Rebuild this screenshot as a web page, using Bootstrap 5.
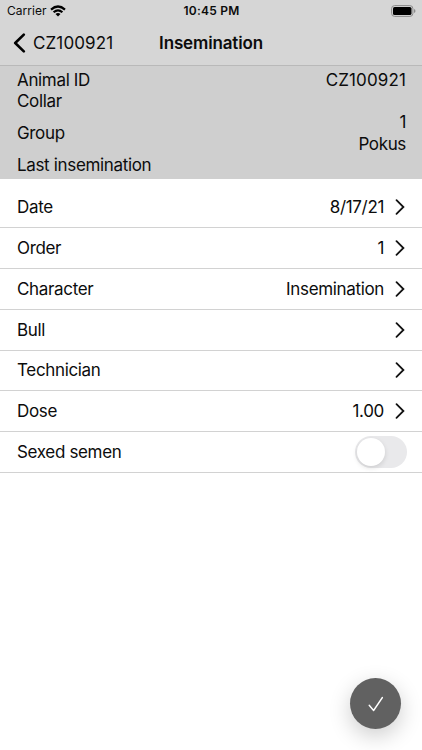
<!DOCTYPE html>
<html lang="en">
<head>
<meta charset="utf-8">
<meta name="viewport" content="width=device-width, initial-scale=1">
<title>Insemination</title>
<link href="https://cdn.jsdelivr.net/npm/bootstrap@5.3.0/dist/css/bootstrap.min.css" rel="stylesheet">
<style>
body{font-family:Inter,"Liberation Sans",sans-serif;font-size:17px;line-height:20px;color:#0c0c0c;letter-spacing:-.34px;height:750px;overflow:hidden}
svg{display:block;flex:none}
.top-area{background:#d6d6d6;height:66px;border-bottom:1px solid #b9b9b9}
.status{height:22px;font-size:12px;line-height:22px;padding:0 6px 0 7px}
.side{flex:1 1 0}
.status .carrier{letter-spacing:.02px}
.clock{letter-spacing:.25px}
.title-bar{height:43px;padding:0 13px 1px}
.title-bar .page-title{letter-spacing:-.15px}
.code-text{letter-spacing:.12px}
.back-text{margin-left:7px}
.info{background:#cfcfcf;height:113px;padding:4px 16px 0 17px}
.info .gap-a{margin-top:1px}
.info .gap-b{margin-top:12px}
.info .gap-c{margin-top:22px}
.info .gap-d{margin-top:2px}
.rows{padding-top:8.2px}
.item{height:40.83px;border:0;border-bottom:1px solid #d2d2d2;padding:0 16px 0 17px;color:#0c0c0c}
.item svg{margin-left:10px}
.switch{width:52px;height:32px;background:#e9e9eb;border-radius:16px;padding:2px;margin-right:-1px}
.knob{width:28px;height:28px;background:#fff;border-radius:50%;box-shadow:0 2px 5px rgba(0,0,0,.12)}
.confirm{width:51px;height:51px;right:21px;bottom:21px;background:#616161;box-shadow:0 7px 22px rgba(0,0,0,.2)}
</style>
<script src="https://cdn.jsdelivr.net/npm/bootstrap@5.3.0/dist/js/bootstrap.bundle.min.js"></script>
</head>
<body class="bg-white position-relative">
<header class="top-area">
  <div class="status d-flex align-items-center">
    <div class="side d-flex align-items-center"><span class="carrier">Carrier</span>
      <svg class="ms-1" width="16" height="12" viewBox="0 0 16 12"><g fill="none" stroke="#000" stroke-width="2.2"><path d="M1 4.6Q8-1.6 15 4.6"/><path d="M3.6 7.3Q8 3.4 12.4 7.3"/></g><path d="M8 11.4 5.5 8.9Q8 7 10.5 8.9Z"/></svg>
    </div>
    <span class="clock fw-semibold">10:45 PM</span>
    <div class="side d-flex justify-content-end">
      <svg width="25" height="12" viewBox="0 0 25 12"><rect x=".6" y=".6" width="21.3" height="10.8" rx="3" fill="none" stroke="#8b8b8b"/><rect x="2" y="2" width="18.5" height="8" rx="1.6"/><path d="M23 4q1.5.5 1.5 2T23 8Z" fill="#8b8b8b"/></svg>
    </div>
  </div>
  <nav class="title-bar d-flex align-items-center">
    <div class="side d-flex align-items-center">
      <svg width="13" height="20" viewBox="0 0 13 20"><path d="M10.8 1.6 2.2 10l8.6 8.4" fill="none" stroke="#000" stroke-width="2.6" stroke-linecap="round" stroke-linejoin="round"/></svg>
      <span class="back-text code-text">CZ100921</span>
    </div>
    <span class="page-title fw-semibold">Insemination</span>
    <div class="side"></div>
  </nav>
</header>
<section class="info d-flex justify-content-between">
  <div><div>Animal ID</div><div class="gap-a">Collar</div><div class="gap-b">Group</div><div class="gap-b">Last insemination</div></div>
  <div class="text-end"><div class="code-text">CZ100921</div><div class="gap-c">1</div><div class="gap-d">Pokus</div></div>
</section>
<svg class="d-none"><symbol id="chev" viewBox="0 0 12 18"><path d="M2.5 2.2 9.4 9l-6.9 6.8" fill="none" stroke="#111" stroke-width="1.8" stroke-linecap="round" stroke-linejoin="miter"/></symbol></svg>
<main class="rows list-group list-group-flush rounded-0">
  <div class="item d-flex align-items-center"><span class="me-auto">Date</span><span>8/17/21</span><svg width="12" height="18"><use href="#chev"/></svg></div>
  <div class="item d-flex align-items-center"><span class="me-auto">Order</span><span>1</span><svg width="12" height="18"><use href="#chev"/></svg></div>
  <div class="item d-flex align-items-center"><span class="me-auto">Character</span><span>Insemination</span><svg width="12" height="18"><use href="#chev"/></svg></div>
  <div class="item d-flex align-items-center"><span class="me-auto">Bull</span><svg width="12" height="18"><use href="#chev"/></svg></div>
  <div class="item d-flex align-items-center"><span class="me-auto">Technician</span><svg width="12" height="18"><use href="#chev"/></svg></div>
  <div class="item d-flex align-items-center"><span class="me-auto">Dose</span><span>1.00</span><svg width="12" height="18"><use href="#chev"/></svg></div>
  <div class="item d-flex align-items-center"><span class="me-auto">Sexed semen</span><div class="switch" role="switch" aria-checked="false"><div class="knob"></div></div></div>
</main>
<button class="confirm btn border-0 rounded-circle position-absolute d-flex align-items-center justify-content-center p-0" aria-label="Confirm">
  <svg width="16" height="16" viewBox="0 0 16 16"><path d="M1.2 9.2 5.6 14.5 14.4 1.5" fill="none" stroke="#fff" stroke-width="1.4" stroke-linecap="round" stroke-linejoin="round"/></svg>
</button>
</body>
</html>
